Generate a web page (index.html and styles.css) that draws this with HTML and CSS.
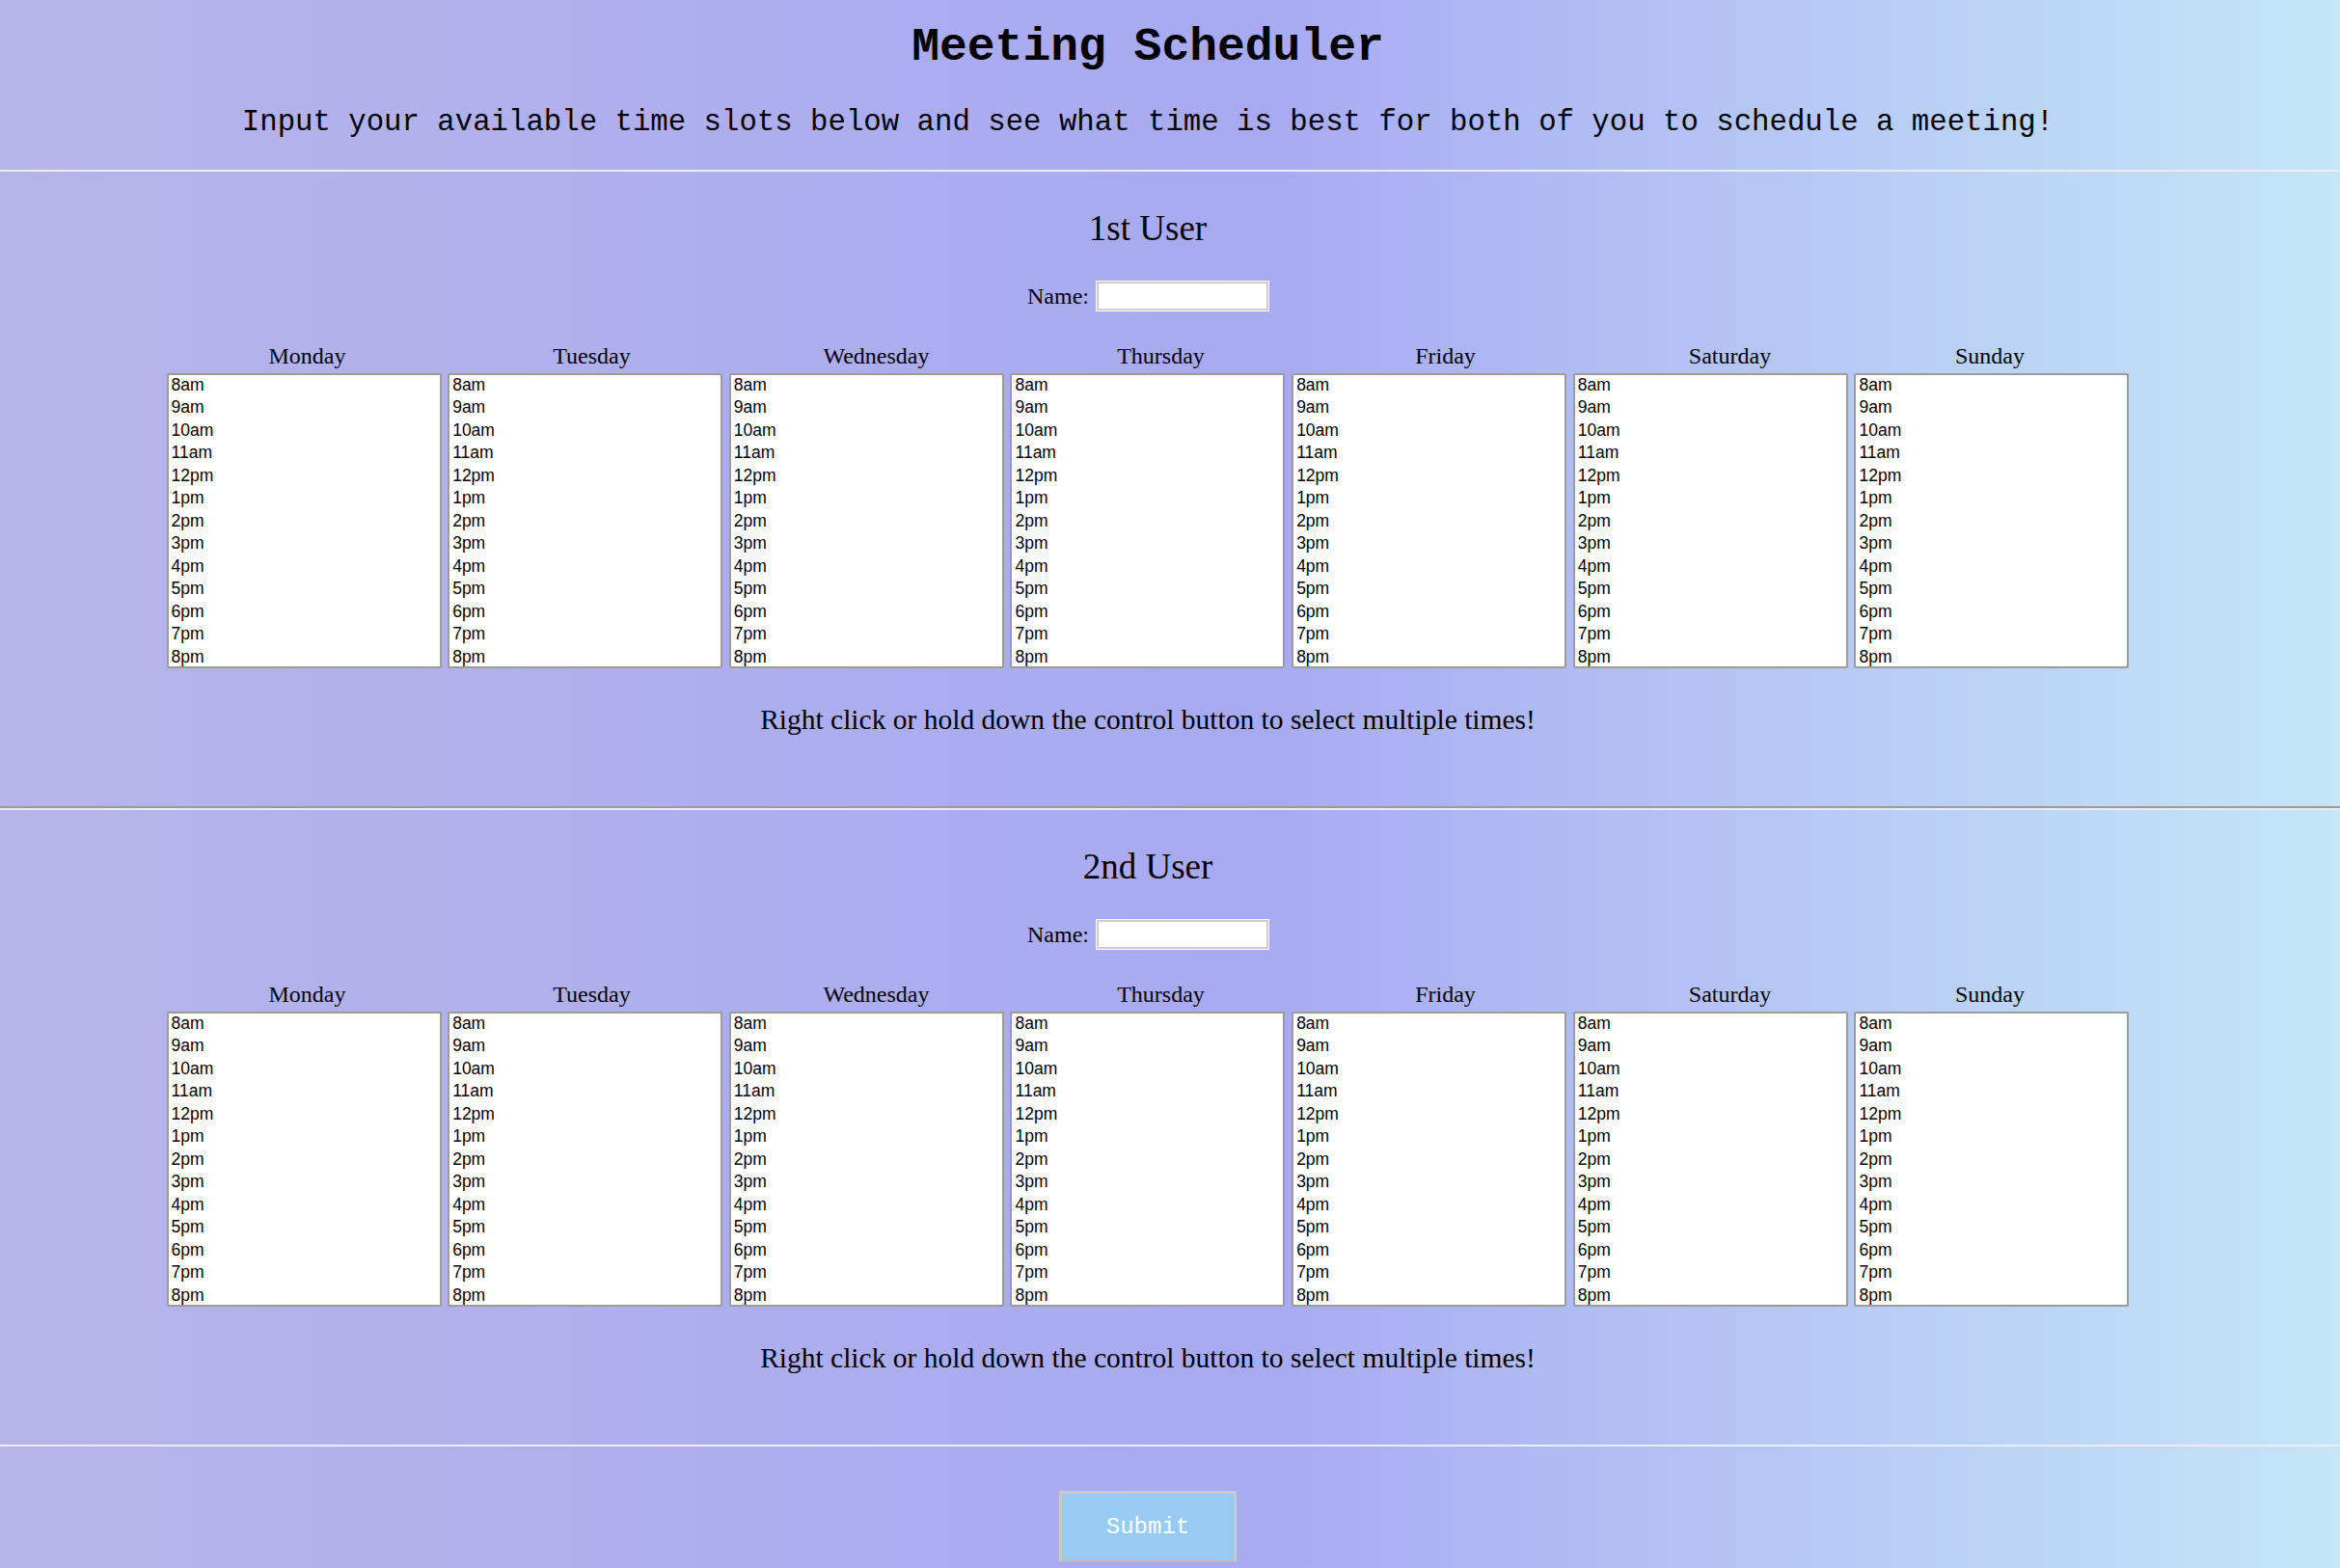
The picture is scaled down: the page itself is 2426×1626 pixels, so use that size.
FILE: index.html
```html
<!DOCTYPE html>
<html lang="en">
<head>
<meta charset="utf-8">
<title>Meeting Scheduler</title>
<link rel="stylesheet" href="styles.css">
</head>
<body>
<header class="top">
  <h1 class="title">Meeting Scheduler</h1>
  <p class="subtitle">Input your available time slots below and see what time is best for both of you to schedule a meeting!</p>
</header>
<hr class="rule rule-light">
<section class="user">
  <h2 class="user-title">1st User</h2>
  <div class="name-row"><label class="name-label" for="n1">Name:</label><input class="name-input" id="n1" type="text"></div>
  <div class="week">
    <div class="day-names">
      <div class="day-name">Monday</div>
      <div class="day-name">Tuesday</div>
      <div class="day-name">Wednesday</div>
      <div class="day-name">Thursday</div>
      <div class="day-name">Friday</div>
      <div class="day-name">Saturday</div>
      <div class="day-name">Sunday</div>
    </div>
    <div class="day-slots">
      <select class="slots" multiple size="13" aria-label="Monday"><option>8am</option><option>9am</option><option>10am</option><option>11am</option><option>12pm</option><option>1pm</option><option>2pm</option><option>3pm</option><option>4pm</option><option>5pm</option><option>6pm</option><option>7pm</option><option>8pm</option></select>
      <select class="slots" multiple size="13" aria-label="Tuesday"><option>8am</option><option>9am</option><option>10am</option><option>11am</option><option>12pm</option><option>1pm</option><option>2pm</option><option>3pm</option><option>4pm</option><option>5pm</option><option>6pm</option><option>7pm</option><option>8pm</option></select>
      <select class="slots" multiple size="13" aria-label="Wednesday"><option>8am</option><option>9am</option><option>10am</option><option>11am</option><option>12pm</option><option>1pm</option><option>2pm</option><option>3pm</option><option>4pm</option><option>5pm</option><option>6pm</option><option>7pm</option><option>8pm</option></select>
      <select class="slots" multiple size="13" aria-label="Thursday"><option>8am</option><option>9am</option><option>10am</option><option>11am</option><option>12pm</option><option>1pm</option><option>2pm</option><option>3pm</option><option>4pm</option><option>5pm</option><option>6pm</option><option>7pm</option><option>8pm</option></select>
      <select class="slots" multiple size="13" aria-label="Friday"><option>8am</option><option>9am</option><option>10am</option><option>11am</option><option>12pm</option><option>1pm</option><option>2pm</option><option>3pm</option><option>4pm</option><option>5pm</option><option>6pm</option><option>7pm</option><option>8pm</option></select>
      <select class="slots" multiple size="13" aria-label="Saturday"><option>8am</option><option>9am</option><option>10am</option><option>11am</option><option>12pm</option><option>1pm</option><option>2pm</option><option>3pm</option><option>4pm</option><option>5pm</option><option>6pm</option><option>7pm</option><option>8pm</option></select>
      <select class="slots" multiple size="13" aria-label="Sunday"><option>8am</option><option>9am</option><option>10am</option><option>11am</option><option>12pm</option><option>1pm</option><option>2pm</option><option>3pm</option><option>4pm</option><option>5pm</option><option>6pm</option><option>7pm</option><option>8pm</option></select>
    </div>
  </div>
  <p class="hint">Right click or hold down the control button to select multiple times!</p>
</section>
<hr class="rule rule-dark">
<section class="user">
  <h2 class="user-title">2nd User</h2>
  <div class="name-row"><label class="name-label" for="n2">Name:</label><input class="name-input" id="n2" type="text"></div>
  <div class="week">
    <div class="day-names">
      <div class="day-name">Monday</div>
      <div class="day-name">Tuesday</div>
      <div class="day-name">Wednesday</div>
      <div class="day-name">Thursday</div>
      <div class="day-name">Friday</div>
      <div class="day-name">Saturday</div>
      <div class="day-name">Sunday</div>
    </div>
    <div class="day-slots">
      <select class="slots" multiple size="13" aria-label="Monday"><option>8am</option><option>9am</option><option>10am</option><option>11am</option><option>12pm</option><option>1pm</option><option>2pm</option><option>3pm</option><option>4pm</option><option>5pm</option><option>6pm</option><option>7pm</option><option>8pm</option></select>
      <select class="slots" multiple size="13" aria-label="Tuesday"><option>8am</option><option>9am</option><option>10am</option><option>11am</option><option>12pm</option><option>1pm</option><option>2pm</option><option>3pm</option><option>4pm</option><option>5pm</option><option>6pm</option><option>7pm</option><option>8pm</option></select>
      <select class="slots" multiple size="13" aria-label="Wednesday"><option>8am</option><option>9am</option><option>10am</option><option>11am</option><option>12pm</option><option>1pm</option><option>2pm</option><option>3pm</option><option>4pm</option><option>5pm</option><option>6pm</option><option>7pm</option><option>8pm</option></select>
      <select class="slots" multiple size="13" aria-label="Thursday"><option>8am</option><option>9am</option><option>10am</option><option>11am</option><option>12pm</option><option>1pm</option><option>2pm</option><option>3pm</option><option>4pm</option><option>5pm</option><option>6pm</option><option>7pm</option><option>8pm</option></select>
      <select class="slots" multiple size="13" aria-label="Friday"><option>8am</option><option>9am</option><option>10am</option><option>11am</option><option>12pm</option><option>1pm</option><option>2pm</option><option>3pm</option><option>4pm</option><option>5pm</option><option>6pm</option><option>7pm</option><option>8pm</option></select>
      <select class="slots" multiple size="13" aria-label="Saturday"><option>8am</option><option>9am</option><option>10am</option><option>11am</option><option>12pm</option><option>1pm</option><option>2pm</option><option>3pm</option><option>4pm</option><option>5pm</option><option>6pm</option><option>7pm</option><option>8pm</option></select>
      <select class="slots" multiple size="13" aria-label="Sunday"><option>8am</option><option>9am</option><option>10am</option><option>11am</option><option>12pm</option><option>1pm</option><option>2pm</option><option>3pm</option><option>4pm</option><option>5pm</option><option>6pm</option><option>7pm</option><option>8pm</option></select>
    </div>
  </div>
  <p class="hint">Right click or hold down the control button to select multiple times!</p>
</section>
<hr class="rule rule-light">
<div class="actions"><button class="submit" type="button">Submit</button></div>
</body>
</html>
```

FILE: styles.css
```css
html {
  overflow: hidden;
  background: linear-gradient(to right, #b6b4e9 0%, #a8aaf2 54%, #b8ccf5 80%, #c4e6f7 100%);
  min-height: 100%;
}
body {
  margin: 0;
  min-height: 100vh;
  color: #000;
  font-family: "Liberation Serif", "Times New Roman", serif;
}
.top {
  padding: 19px 46px 31px 0;
  text-align: center;
}
.title {
  margin: 0;
  font-family: "Liberation Mono", "Courier New", monospace;
  font-weight: bold;
  font-size: 48px;
  line-height: 60px;
}
.subtitle {
  margin: 30px 0 0;
  font-family: "Liberation Mono", "Courier New", monospace;
  font-size: 30.7px;
  line-height: 36px;
}
.rule {
  margin: 0;
  border: 0;
  height: 0;
}
.rule-light {
  border-top: 2px solid #ececf2;
}
.rule-dark {
  border-top: 2px solid #9b9b9b;
  border-bottom: 2px solid #ececec;
}
.user {
  padding: 36.5px 46px 73.5px 0;
  text-align: center;
}
.user-title {
  margin: 0;
  font-weight: normal;
  font-size: 37px;
  line-height: 44px;
}
.name-row {
  margin-top: 33.5px;
  display: flex;
  justify-content: center;
  align-items: center;
  gap: 8px;
  height: 30px;
}
.name-label {
  font-size: 24px;
  line-height: 30px;
}
.name-input {
  box-sizing: border-box;
  width: 178px;
  height: 30px;
  margin: 0;
  padding: 0 4px;
  border: 2px solid #cdcdcd;
  box-shadow: 0 0 0 1px #ffffff;
  background: #fff;
  font-size: 20px;
}
.week {
  margin: 33px auto 0;
  width: 2035px;
}
.day-names {
  display: grid;
  grid-template-columns: repeat(6, 295px) 244px;
  margin-left: -1.5px;
  margin-bottom: 4px;
}
.day-name {
  font-size: 24px;
  line-height: 28px;
}
.day-slots {
  display: grid;
  grid-template-columns: repeat(7, 285px);
  column-gap: 6.67px;
}
.slots {
  box-sizing: border-box;
  width: 100%;
  height: 306px;
  margin: 0;
  padding: 0;
  border: 2px solid #9c9c9c;
  background: #fff;
  overflow: hidden;
  scrollbar-width: none;
  font-family: "Liberation Sans", Arial, sans-serif;
  font-size: 17.5px;
  color: #000;
  text-align: left;
}
.slots option {
  padding: 0 3px;
  height: 23.47px;
  line-height: 23.47px;
  min-height: 0;
}
.hint {
  margin: 35.5px 0 0;
  font-size: 29.5px;
  line-height: 34px;
}
.actions {
  padding: 46px 46px 0 0;
  text-align: center;
}
.submit {
  box-sizing: border-box;
  width: 184px;
  height: 74px;
  margin: 0;
  padding: 0;
  border: 3px solid #c9c9c9;
  border-bottom-color: #bdbdbd;
  background: #97cbf4;
  color: #fff;
  font-family: "Liberation Mono", "Courier New", monospace;
  font-size: 24px;
  cursor: pointer;
}
```
